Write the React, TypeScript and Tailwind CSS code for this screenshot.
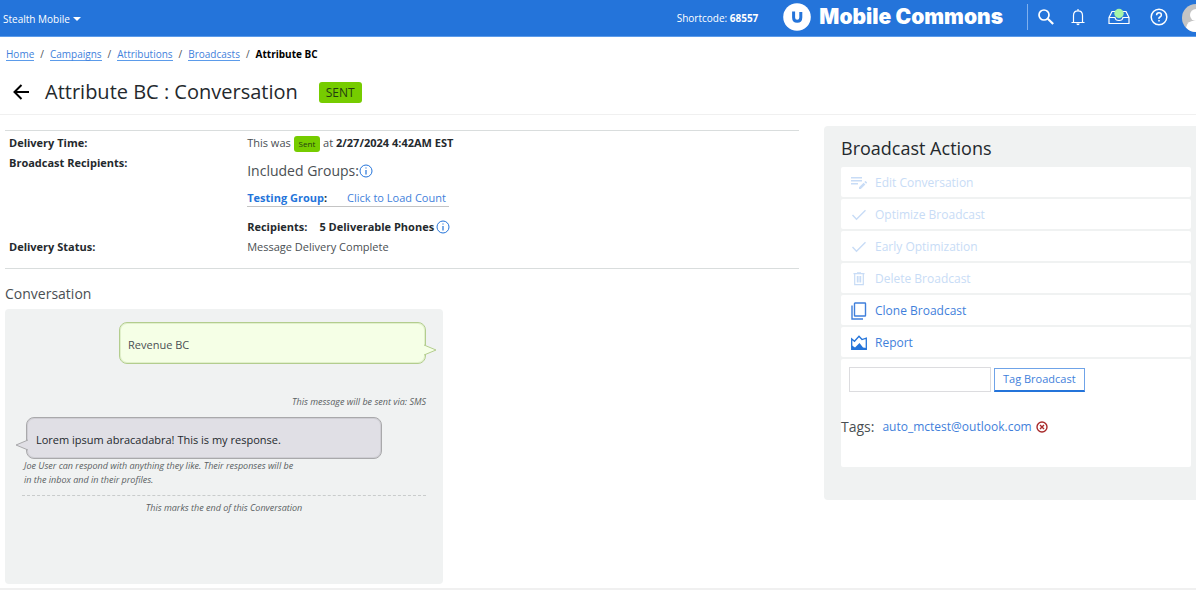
import type { ReactNode } from "react";

function InfoIcon() {
  return (
    <svg viewBox="0 0 14 14" className="h-[14px] w-[14px] shrink-0" fill="none" stroke="#2474da" strokeWidth="1">
      <circle cx="7" cy="7" r="6" />
      <path d="M7 6v4.500M7 3.400v1.200" strokeWidth="1.200" />
    </svg>
  );
}

function EditIcon() {
  return (
    <svg viewBox="0 0 16 14" className="h-[14px] w-4" fill="currentColor">
      <path d="M0 1h11v1.500H0zM0 4h11v1.500H0zM0 7h7v1.500H0zM8 11.300l4.600-4.600 1.800 1.800-4.600 4.600H8zM13.300 6l.8-.8q.4-.3.8 0l1 1q.3.4 0 .8l-.8.8z" />
    </svg>
  );
}

function CheckIcon() {
  return (
    <svg viewBox="0 0 16 14" className="h-[14px] w-4" fill="none" stroke="currentColor" strokeWidth="1.400">
      <path d="M1.500 7l4 4.300L14.500 2.200" />
    </svg>
  );
}

function TrashIcon() {
  return (
    <svg viewBox="0 0 16 14" className="h-[14px] w-4" fill="none" stroke="currentColor" strokeWidth="1.200">
      <path d="M2.500 1.600h11M6 .8h4M3.700 1.600v11h8.600v-11M6.400 4v6.500M8 4v6.500M9.600 4v6.500" />
    </svg>
  );
}

function CloneIcon() {
  return (
    <svg viewBox="0 0 16 18" className="h-[18px] w-4" fill="none" stroke="currentColor" strokeWidth="1.400">
      <rect x="3.500" y="1" width="11" height="13" rx=".5" />
      <path d="M1 3.500V17h11" />
    </svg>
  );
}

function ReportIcon() {
  return (
    <svg viewBox="0 0 16 16" className="h-4 w-4" fill="#2474da">
      <path d="M.7 14.300V4L3.500 6.300 8 1.200 11 4.500l4.300-1.300v11.100z" fill="none" stroke="#2474da" strokeWidth="1.300" />
      <path d="M1 14.500V10.500l3 2L8.500 8l3.500 4.500 3.500.5v1.500z" />
    </svg>
  );
}

function Action({ icon, children, disabled = false }: { icon: ReactNode; children: ReactNode; disabled?: boolean }) {
  return (
    <li>
      <button
        type="button"
        disabled={disabled}
        className="flex h-[30px] w-full items-center gap-2 rounded-xs bg-white px-[10px] pt-[2px] text-left text-[12px] text-[#3f7fdb] disabled:text-[#c8dcf6]"
      >
        {icon}
        {children}
      </button>
    </li>
  );
}

const crumbs = ["Home", "Campaigns", "Attributions", "Broadcasts"];

function Header() {
  return (
    <header className="flex h-[37px] items-center overflow-hidden border-b border-[#5b9bea] bg-[#2474da] text-[10px] text-white">
      <button type="button" className="flex items-center gap-[3px] pl-[3px] pt-[2px]">
        Stealth Mobile
        <svg viewBox="0 0 8 4" className="h-1 w-2" fill="currentColor">
          <path d="M0 0h8L4 4z" />
        </svg>
      </button>
      <div className="ml-auto mr-[25px]">
        Shortcode: <b className="font-bold">68557</b>
      </div>
      <a href="#" className="mr-6 flex items-center gap-2 pb-[2px]">
        <svg viewBox="0 0 28 28" className="h-7 w-7">
          <circle cx="14" cy="14" r="13.800" fill="#fff" />
          <path d="M10.600 8.500v6q0 3.800 3.600 3.800t3.600-3.800V9" fill="none" stroke="#2474da" strokeWidth="3" />
        </svg>
        <span className="font-[Inter,sans-serif] text-[21px] font-black">Mobile Commons</span>
      </a>
      <div className="mb-[2px] h-[26px] w-px bg-[#7fb0ee]" />
      <nav className="flex items-center pb-[3px]">
        <button type="button" aria-label="Search" className="ml-[9px]">
          <svg viewBox="0 0 18 18" className="h-[18px] w-[18px]" fill="none" stroke="#fff">
            <circle cx="7" cy="7" r="5" strokeWidth="1.700" />
            <path d="M10.800 10.800l5.400 5.200" strokeWidth="2.200" />
          </svg>
        </button>
        <button type="button" aria-label="Notifications" className="ml-[15px]">
          <svg viewBox="0 0 16 18" className="h-[18px] w-4" fill="none" stroke="#fff" strokeWidth="1.200">
            <path d="M1.500 14.500h13M3.500 14.500V7.500Q3.500 2.800 8 2.800t4.500 4.700v7M8 2.800V1" />
            <path d="M6.300 15.500h3.400q-.2 1.700-1.700 1.700t-1.700-1.700" fill="#fff" stroke="none" />
          </svg>
        </button>
        <button type="button" aria-label="Inbox" className="ml-[22px]">
          <svg viewBox="0 0 22 18" className="h-[18px] w-[22px]" fill="none" stroke="#fff" strokeWidth="1.200">
            <path d="M1 9.500L4 3.500h14l3 6v6H1zM1 9.500h6q.5 3 4 3t4-3h6" />
            <circle cx="11" cy="5.500" r="4.700" fill="#a5f5a8" stroke="none" />
          </svg>
        </button>
        <button type="button" aria-label="Help" className="ml-[20px]">
          <svg viewBox="0 0 18 18" className="h-[18px] w-[18px]" fill="none" stroke="#fff" strokeWidth="1.500">
            <circle cx="9" cy="9" r="7.800" />
            <path d="M6.600 7.300q0-2.500 2.400-2.500t2.400 2.200q0 1.200-1.400 2T9 11M9 12v1.600" />
          </svg>
        </button>
        <button type="button" aria-label="Account" className="-mr-[14px] ml-[14px] pt-[2px]">
          <svg viewBox="0 0 28 28" className="h-7 w-7">
            <circle cx="14" cy="14" r="14" fill="#c4c4c4" />
            <circle cx="14" cy="11" r="6" fill="#fff" />
            <path d="M4 23.500q1-7 10-7t10 7q-4 4.500-10 4.500T4 23.500z" fill="#fff" />
          </svg>
        </button>
      </nav>
    </header>
  );
}

function DeliveryDetails() {
  return (
    <table className="w-full border-y border-[#d9dddd] text-left text-[11px] leading-5 text-[#4a4f53]">
      <tbody className="align-top">
        <tr>
          <th scope="row" className="w-[30%] pl-1 pt-[2px] font-bold text-[#24292d]">Delivery Time:</th>
          <td className="pl-1 pt-[2px]">
            This was{" "}
            <span className="inline-block h-4 rounded-[3px] bg-[#76cc00] px-[5px] align-middle text-[8px] leading-4 text-[#243c10]">Sent</span>{" "}
            at <b className="text-[#24292d]">2/27/2024 4:42AM EST</b>
          </td>
        </tr>
        <tr>
          <th scope="row" className="pl-1 font-bold text-[#24292d]">Broadcast Recipients:</th>
          <td className="pl-1">
            <h3 className="flex items-center text-[14px] leading-9">
              Included Groups:
              <InfoIcon />
            </h3>
            <div className="flex w-[202px] gap-5 whitespace-nowrap border-b border-[#c4c4c4] leading-[17px]">
              <span className="font-bold text-[#24292d]">
                <a href="#" className="text-[#2474da]">Testing Group</a>:
              </span>
              <a href="#" className="text-[#3f7fdb]">Click to Load Count</a>
            </div>
            <div className="flex items-center pt-[10px] font-bold text-[#24292d]">
              <span className="mr-3">Recipients:</span>
              <span className="mr-[2px]">5 Deliverable Phones</span>
              <InfoIcon />
            </div>
          </td>
        </tr>
        <tr>
          <th scope="row" className="pb-[11px] pl-1 font-bold text-[#24292d]">Delivery Status:</th>
          <td className="pb-[11px] pl-1">Message Delivery Complete</td>
        </tr>
      </tbody>
    </table>
  );
}

function Conversation() {
  return (
    <section>
      <h2 className="mt-[13px] text-[14px] leading-6 text-[#4a4f53]">Conversation</h2>
      <div className="mt-[3px] flex min-h-[275px] w-[55%] min-w-[438px] flex-col rounded bg-[#f0f2f2] px-[17px] pb-4 pt-[13px] text-[9px] italic leading-[14px] text-[#5a5f62]">
        <div className="relative ml-[97px] flex h-[42px] items-center rounded-lg border border-[#b3cd8e] bg-[#f5ffe6] px-2 pt-1 text-[11px] not-italic text-[#4a4f53] ring-1 ring-inset ring-[#b3cd8e]/30">
          Revenue BC
          <svg viewBox="0 0 13 12" className="absolute -right-3 top-[21px] h-3 w-[13px]">
            <path d="M0 1L12 6 0 11" fill="#f5ffe6" stroke="#b3cd8e" />
          </svg>
        </div>
        <p className="mt-[31px] text-right">This message will be sent via: SMS</p>
        <div className="relative ml-1 mr-[44px] mt-2 flex h-[42px] shrink-0 items-center rounded-lg border border-[#a9a9ab] bg-[#e0dfe5] px-[9px] pt-1 text-[11px] not-italic text-[#24292d] ring-1 ring-inset ring-[#a9a9ab]/30">
          Lorem ipsum abracadabra! This is my response.
          <svg viewBox="0 0 13 12" className="absolute -left-3 top-[21px] h-3 w-[13px]">
            <path d="M13 1L1 6l12 5" fill="#e0dfe5" stroke="#a9a9ab" />
          </svg>
        </div>
        <p className="w-[275px] pl-[2px]">
          Joe User can respond with anything they like. Their responses will be in the inbox and in their profiles.
        </p>
        <p className="mt-2 border-t border-dashed border-[#c9cccc] pt-[5px] text-center">This marks the end of this Conversation</p>
      </div>
    </section>
  );
}

function Sidebar() {
  return (
    <aside className="mt-[11px] w-[31%] min-w-[372px] self-start rounded-l bg-[#f0f2f2] pb-[33px] pl-[17px] pr-[5px] pt-2">
      <h2 className="text-[18px] leading-7 text-[#24292d]">Broadcast Actions</h2>
      <ul className="mt-[5px] flex flex-col gap-[2px]">
        <Action icon={<EditIcon />} disabled>Edit Conversation</Action>
        <Action icon={<CheckIcon />} disabled>Optimize Broadcast</Action>
        <Action icon={<CheckIcon />} disabled>Early Optimization</Action>
        <Action icon={<TrashIcon />} disabled>Delete Broadcast</Action>
        <Action icon={<CloneIcon />}>Clone Broadcast</Action>
        <Action icon={<ReportIcon />}>Report</Action>
      </ul>
      <div className="mt-[2px] rounded-xs bg-white pb-7 pt-2">
        <form className="flex items-center gap-[3px] pl-2" onSubmit={(e) => e.preventDefault()}>
          <input type="text" aria-label="Tag" className="h-[25px] w-[142px] border border-[#dcdcdf] px-1 text-[11px] outline-none" />
          <button type="submit" className="h-6 border border-b-2 border-[#6fa3e8] border-b-[#2474da] px-2 text-[11px] leading-5 text-[#3f7fdb]">
            Tag Broadcast
          </button>
        </form>
        <div className="mt-[23px] flex items-center text-[14px] leading-6 text-[#4a4f53]">
          <span className="mr-2">Tags:</span>
          <a href="#" className="mr-1 text-[12px] text-[#3f7fdb]">auto_mctest@outlook.com</a>
          <button type="button" aria-label="Remove tag">
            <svg viewBox="0 0 12 12" className="h-3 w-3" fill="none" stroke="#a82a2a" strokeWidth="1.400">
              <circle cx="6" cy="6" r="5" />
              <path d="M4 4l4 4M8 4L4 8" />
            </svg>
          </button>
        </div>
      </div>
    </aside>
  );
}

export default function App() {
  return (
    <div className="min-h-screen bg-white font-['Open_Sans','Noto_Sans',sans-serif]">
      <Header />
      <nav aria-label="Breadcrumb" className="flex items-center gap-[6px] px-[6px] pt-2 text-[10px] leading-[18px] text-[#4a4f53]">
        {crumbs.map((name) => (
          <span key={name} className="flex gap-[6px]">
            <a href="#" className="h-4 border-b border-[#5b9bea] text-[#3f7fdb]">{name}</a>
            <span>/</span>
          </span>
        ))}
        <b className="text-black">Attribute BC</b>
      </nav>
      <div className="flex h-[52px] items-center border-b border-[#f0f0f0] pl-[13px] pt-[7px]">
        <button type="button" aria-label="Back" className="mr-4">
          <svg viewBox="0 0 16 16" className="h-4 w-4" fill="none" stroke="#000" strokeWidth="2">
            <path d="M16 8H2M8.500 1L1.500 8l7 7" />
          </svg>
        </button>
        <h1 className="text-[20px] leading-7 text-[#24292d]">Attribute BC : Conversation</h1>
        <span className="ml-[21px] rounded-[3px] bg-[#76cc00] px-[7px] text-[12px] leading-[21px] text-[#243c10]">SENT</span>
      </div>
      <main className="flex gap-[25px] pl-[5px]">
        <div className="min-w-0 flex-1 pt-[15px]">
          <DeliveryDetails />
          <Conversation />
        </div>
        <Sidebar />
      </main>
      <footer className="mt-1 h-[3px] border-b border-[#cfdae3] bg-[#f0f0f0]" />
    </div>
  );
}
